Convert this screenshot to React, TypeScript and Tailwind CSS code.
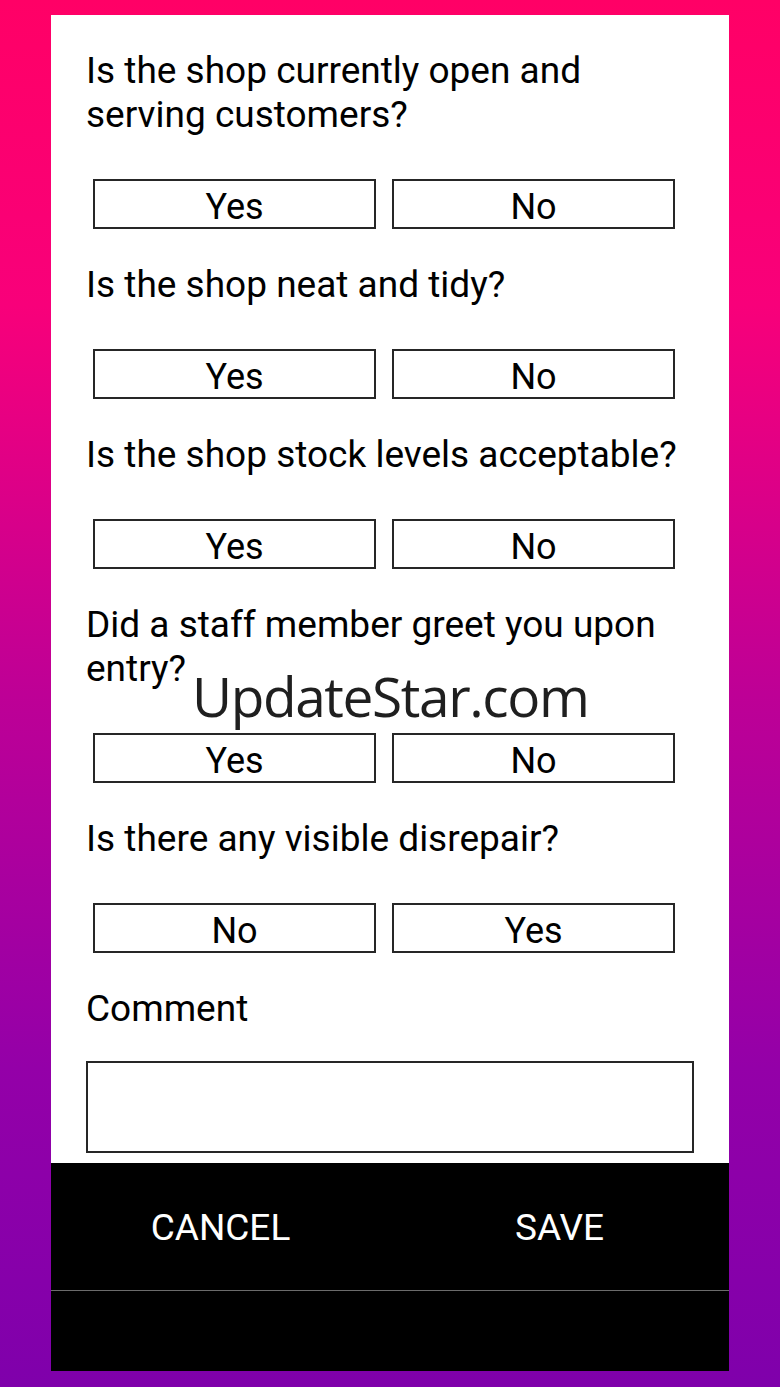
import React from 'react'

const questions = [
  { text: 'Is the shop currently open and serving customers?', options: ['Yes', 'No'] },
  { text: 'Is the shop neat and tidy?', options: ['Yes', 'No'] },
  { text: 'Is the shop stock levels acceptable?', options: ['Yes', 'No'] },
  { text: 'Did a staff member greet you upon entry?', options: ['Yes', 'No'] },
  { text: 'Is there any visible disrepair?', options: ['No', 'Yes'] },
]

function Question({ text, options }: { text: string; options: string[] }) {
  return (
    <div className="pt-[34px]">
      <p className="text-[37px] leading-[44px] text-black">{text}</p>
      <div className="mt-[42px] flex gap-[16px] pl-[7px]">
        {options.map((o) => (
          <button
            key={o}
            className="flex h-[50px] w-[283px] items-center justify-center border-2 border-[#262626] bg-white pt-[5px] text-[36px] leading-none text-black"
          >
            {o}
          </button>
        ))}
      </div>
    </div>
  )
}

export default function App() {
  return (
    <div
      className="min-h-[1387px] w-full bg-[linear-gradient(to_bottom,#ff0066_0%,#f8007a_22%,#be0096_50%,#9400a8_77%,#7f00ab_100%)] px-[51px] py-[15px]"
      style={{ fontFamily: 'Roboto, "Noto Sans", sans-serif' }}
    >
      <div className="relative bg-white">
        <div className="px-[35px] pb-[10px]">
          {questions.map((q) => (
            <Question key={q.text} text={q.text} options={q.options} />
          ))}
          <p className="pt-[34px] text-[37px] leading-[44px] text-black">Comment</p>
          <textarea className="mt-[30px] block h-[92px] w-full resize-none border-2 border-[#262626] bg-white outline-none" />
        </div>

        <div className="flex h-[127px] bg-black">
          <button className="flex flex-1 items-center justify-center pt-[2px] text-[37px] text-white">CANCEL</button>
          <button className="flex flex-1 items-center justify-center pt-[2px] text-[37px] text-white">SAVE</button>
        </div>
        <div className="h-[81px] border-t-[1.5px] border-[#6b6b6b] bg-black" />

        <div
          className="pointer-events-none absolute left-[141px] top-[653px] text-[55px] leading-none tracking-[-1.4px] text-[#1f1f1f]"
          style={{ fontFamily: '"Open Sans", "Noto Sans", sans-serif' }}
        >
          UpdateStar.com
        </div>
      </div>
    </div>
  )
}
